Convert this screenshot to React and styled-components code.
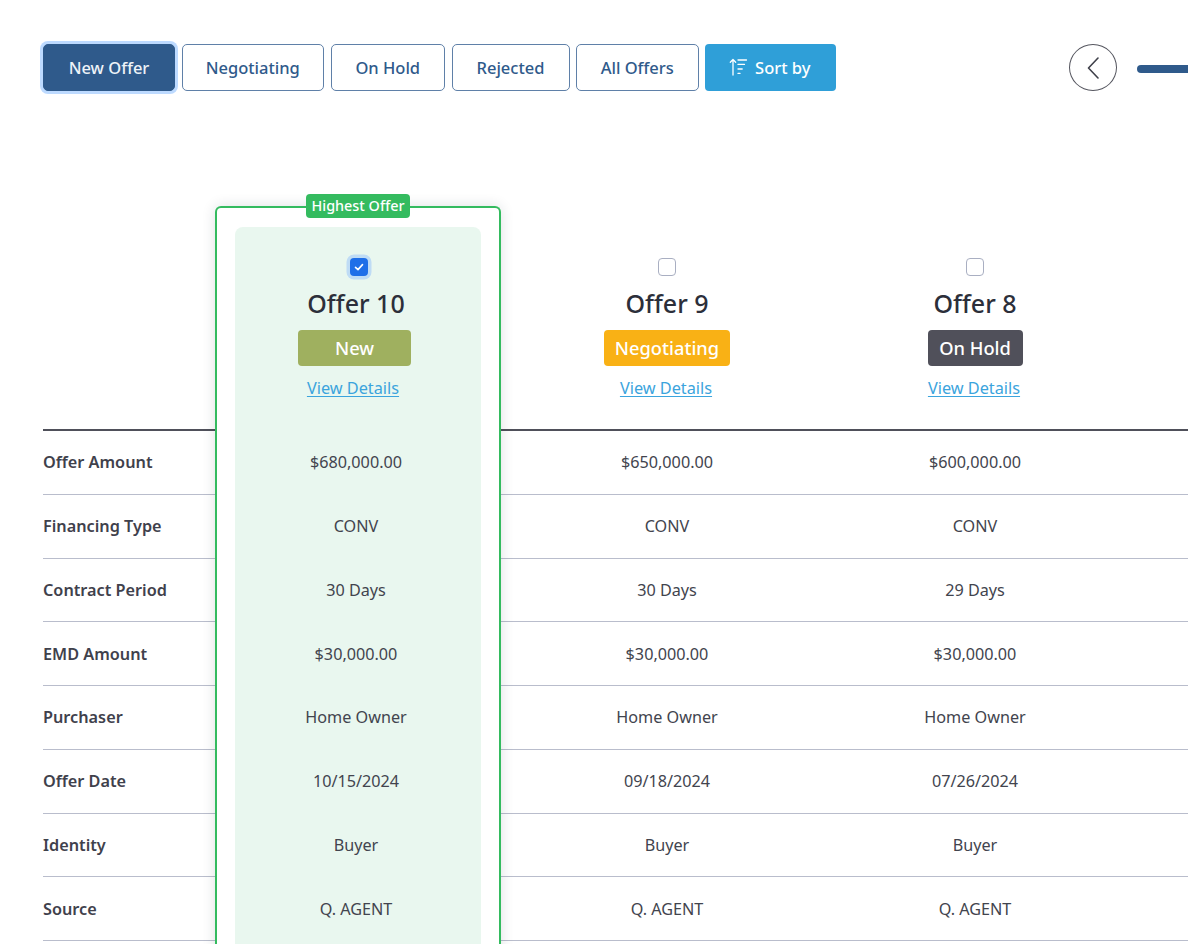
import React from "react";
import styled, { createGlobalStyle } from "styled-components";

const Global = createGlobalStyle`
  html, body { margin: 0; padding: 0; height: 944px; overflow: hidden; background: #fff; }
  body { font-family: "Noto Sans", "Open Sans", sans-serif; color: #2c2f3a; }
  * { box-sizing: border-box; }
`;

const Page = styled.div`
  width: 1188px;
  height: 944px;
  overflow: hidden;
  padding: 44px 0 0 43px;
`;

const Toolbar = styled.div`
  display: flex;
  align-items: flex-start;
  gap: 6.5px;
  height: 47px;
`;

const FilterButton = styled.button`
  flex: none;
  height: 47px;
  width: ${(p) => p.$w}px;
  padding: 0 0 1px;
  font: 500 16.5px "Noto Sans", sans-serif;
  border-radius: 5px;
  border: 1.5px solid ${(p) => (p.$active ? "#2f5a8b" : "#5f80a8")};
  background: ${(p) => (p.$active ? "#2f5a8b" : "#fff")};
  color: ${(p) => (p.$active ? "#eef3f8" : "#2f5a8b")};
  box-shadow: ${(p) => (p.$active ? "0 0 0 3px #bddaff" : "none")};
`;

const SortButton = styled.button`
  flex: none;
  height: 47px;
  width: 130.5px;
  display: flex;
  align-items: center;
  justify-content: center;
  gap: 6px;
  padding: 0 1px 1px 0;
  font: 500 16.5px "Noto Sans", sans-serif;
  color: #fff;
  background: #2f9fd8;
  border: none;
  border-radius: 4px;
`;

const Pager = styled.div`
  display: flex;
  align-items: center;
  gap: 20px;
  margin-left: 227px;
  flex: none;
`;

const RoundButton = styled.button`
  width: 48px;
  height: 47px;
  padding: 0;
  display: flex;
  align-items: center;
  justify-content: center;
  border-radius: 50%;
  border: 1.5px solid #55565f;
  background: #fff;
`;

const ProgressBar = styled.div`
  width: 120px;
  height: 8px;
  margin-top: 3px;
  flex: none;
  background: #2f5a8b;
  border-radius: 4px;
`;

const Table = styled.div`
  display: flex;
  align-items: flex-start;
  margin-top: 115px;
  width: 1145px;
`;

const LabelColumn = styled.div`
  width: 172px;
  flex: none;
  padding-top: 223px;
`;

const HeaderRule = styled.div`
  height: 2px;
  background: #4f505a;
`;

const LabelCell = styled.div`
  height: 63.75px;
  display: flex;
  align-items: center;
  font-size: 16.25px;
  font-weight: 600;
  color: #3f414c;
  border-bottom: 1px solid #b9bdcc;
`;

const HighlightCard = styled.div`
  position: relative;
  z-index: 1;
  width: 286px;
  flex: none;
  padding: 19px 18px 0;
  background: #fff;
  border: 2px solid #34bb5f;
  border-bottom: none;
  border-radius: 6px 6px 0 0;
  box-shadow: 0 0 14px rgba(30, 40, 60, 0.14);
`;

const CardTag = styled.span`
  position: absolute;
  top: -14px;
  left: 89px;
  width: 104px;
  height: 24px;
  padding-bottom: 1px;
  display: flex;
  align-items: center;
  justify-content: center;
  font-size: 14.4px;
  font-weight: 500;
  color: #fff;
  background: #34bb5f;
  border-radius: 4px;
`;

const CardPanel = styled.div`
  background: #e9f7ef;
  border-radius: 8px;
  padding: 0 4px 60px 0;
`;

const OfferColumn = styled.div`
  flex: none;
  width: ${(p) => p.$w}px;
`;

const FillColumn = styled.div`
  flex: 1;
  min-width: 0;
`;

const OfferHead = styled.div`
  display: flex;
  flex-direction: column;
  align-items: center;
  height: ${(p) => (p.$card ? "204px" : "225px")};
  padding-top: ${(p) => (p.$card ? "30.5px" : "51.5px")};
  border-bottom: ${(p) => (p.$card ? "none" : "2px solid #4f505a")};
`;

const BlankHead = styled.div`
  height: 225px;
  border-bottom: 2px solid #4f505a;
`;

const Check = styled.span`
  width: 18px;
  height: 18px;
  flex: none;
  display: flex;
  align-items: center;
  justify-content: center;
  border-radius: 4px;
  margin-left: ${(p) => p.$shift || 0}px;
  border: ${(p) => (p.$on ? "none" : "1.5px solid #a9afc2")};
  background: ${(p) => (p.$on ? "#1f6fe8" : "#fff")};
  box-shadow: ${(p) => (p.$on ? "0 0 0 3.5px #bfdcf5" : "none")};
`;

const OfferTitle = styled.h2`
  margin: 9.5px 0 0;
  height: 36px;
  line-height: 36px;
  font-size: 25px;
  font-weight: 500;
  color: #2c2f3a;
`;

const StatusBadge = styled.span`
  margin-top: 9px;
  margin-left: ${(p) => p.$shift || 0}px;
  width: ${(p) => p.$w}px;
  height: 36px;
  padding-bottom: 1px;
  display: flex;
  align-items: center;
  justify-content: center;
  font-size: 18.3px;
  font-weight: 500;
  color: #fff;
  background: ${(p) => p.$bg};
  border-radius: 4px;
`;

const DetailsLink = styled.a`
  margin-top: 10px;
  margin-left: ${(p) => p.$shift || 0}px;
  font-size: 16.3px;
  line-height: 24px;
  color: #3ba4dd;
  text-decoration: underline;
  text-underline-offset: 2px;
  text-decoration-thickness: 1px;
`;

const ValueCell = styled.div`
  height: 63.75px;
  display: flex;
  align-items: center;
  justify-content: center;
  font-size: 16.2px;
  color: #42444e;
  border-bottom: 1px solid ${(p) => (p.$plain ? "transparent" : "#b9bdcc")};
`;

const SortIcon = () => (
  <svg width="20" height="20" viewBox="0 0 20 20" fill="none" stroke="#fff" strokeWidth="1.3" strokeLinecap="round" strokeLinejoin="round">
    <path d="M4 2.5V18M1.3 5.2 4 2.5l2.7 2.7" />
    <path d="M9 3h8.5M9 7.4h6.5M9 12h4.2M9 16.4h2" />
  </svg>
);

const ChevronIcon = () => (
  <svg width="14" height="22" viewBox="0 0 14 22" fill="none" stroke="#3f404a" strokeWidth="1.6" strokeLinecap="round" strokeLinejoin="round">
    <path d="M12 1 2.5 11l9.5 10" />
  </svg>
);

const CheckIcon = () => (
  <svg width="10" height="10" viewBox="0 0 10 10" fill="none" stroke="#fff" strokeWidth="1.6" strokeLinecap="round" strokeLinejoin="round">
    <path d="M1.5 5.3 4 7.6l4.5-5" />
  </svg>
);

const labels = ["Offer Amount", "Financing Type", "Contract Period", "EMD Amount", "Purchaser", "Offer Date", "Identity", "Source"];

const offers = [
  { title: "Offer 10", status: "New", bg: "#9fb05f", badge: 113, values: ["$680,000.00", "CONV", "30 Days", "$30,000.00", "Home Owner", "10/15/2024", "Buyer", "Q. AGENT"] },
  { title: "Offer 9", status: "Negotiating", bg: "#f9b115", badge: 126, values: ["$650,000.00", "CONV", "30 Days", "$30,000.00", "Home Owner", "09/18/2024", "Buyer", "Q. AGENT"] },
  { title: "Offer 8", status: "On Hold", bg: "#50505a", badge: 95, values: ["$600,000.00", "CONV", "29 Days", "$30,000.00", "Home Owner", "07/26/2024", "Buyer", "Q. AGENT"] },
];

const filters = [
  ["New Offer", 132, true],
  ["Negotiating", 142.5],
  ["On Hold", 114.5],
  ["Rejected", 118],
  ["All Offers", 122.5],
];

const Head = ({ offer, card }) => (
  <OfferHead $card={card}>
    <Check $on={card} $shift={card ? 6 : 0}>{card && <CheckIcon />}</Check>
    <OfferTitle>{offer.title}</OfferTitle>
    <StatusBadge $bg={offer.bg} $w={offer.badge} $shift={card ? -3 : 0}>{offer.status}</StatusBadge>
    <DetailsLink $shift={card ? -6 : -2}>View Details</DetailsLink>
  </OfferHead>
);

export default function App() {
  const [first, second, third] = offers;
  return (
    <Page>
      <Global />
      <Toolbar>
        {filters.map(([text, w, active]) => (
          <FilterButton key={text} $w={w} $active={active}>{text}</FilterButton>
        ))}
        <SortButton><SortIcon />Sort by</SortButton>
        <Pager>
          <RoundButton><ChevronIcon /></RoundButton>
          <ProgressBar />
        </Pager>
      </Toolbar>
      <Table>
        <LabelColumn>
          <HeaderRule />
          {labels.map((l) => <LabelCell key={l}>{l}</LabelCell>)}
        </LabelColumn>
        <HighlightCard>
          <CardTag>Highest Offer</CardTag>
          <CardPanel>
            <Head offer={first} card />
            {first.values.map((v, i) => <ValueCell key={i} $plain>{v}</ValueCell>)}
          </CardPanel>
        </HighlightCard>
        <OfferColumn $w={332}>
          <Head offer={second} />
          {second.values.map((v, i) => <ValueCell key={i}>{v}</ValueCell>)}
        </OfferColumn>
        <OfferColumn $w={284}>
          <Head offer={third} />
          {third.values.map((v, i) => <ValueCell key={i}>{v}</ValueCell>)}
        </OfferColumn>
        <FillColumn>
          <BlankHead />
          {labels.map((l) => <ValueCell key={l} />)}
        </FillColumn>
      </Table>
    </Page>
  );
}
